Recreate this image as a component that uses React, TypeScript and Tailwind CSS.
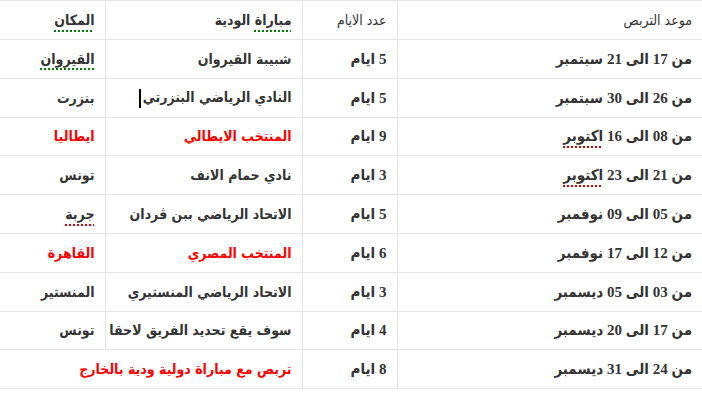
const rows = [
  { date: "من 17 الى 21 سبتمبر", days: "5 ايام", match: "شبيبة القيروان", place: "القيروان", red: false, placeMark: "green" },
  { date: "من 26 الى 30 سبتمبر", days: "5 ايام", match: "النادي الرياضي البنزرتي", place: "بنزرت", red: false, caret: true },
  { date: "من 08 الى 16 اكتوبر", days: "9 ايام", match: "المنتخب الايطالي", place: "ايطاليا", red: true, dateMark: true },
  { date: "من 21 الى 23 اكتوبر", days: "3 ايام", match: "نادي حمام الانف", place: "تونس", red: false, dateMark: true },
  { date: "من 05 الى 09 نوفمبر", days: "5 ايام", match: "الاتحاد الرياضي ببن ڤردان", place: "جربة", red: false, placeMark: "red" },
  { date: "من 12 الى 17 نوفمبر", days: "6 ايام", match: "المنتخب المصري", place: "القاهرة", red: true },
  { date: "من 03 الى 05 ديسمبر", days: "3 ايام", match: "الاتحاد الرياضي المنستيري", place: "المنستير", red: false },
  { date: "من 17 الى 20 ديسمبر", days: "4 ايام", match: "سوف يقع تحديد الفريق لاحقا", place: "تونس", red: false },
];

const serif = "font-['Liberation_Serif','DejaVu_Sans_Condensed','DejaVu_Sans',serif] text-[15px]";
const sans = "font-['DejaVu_Sans_Condensed','DejaVu_Sans',sans-serif] text-[14px]";
const cell = "border border-[#e6e6e6] px-[10px] text-right align-middle whitespace-nowrap overflow-hidden leading-[20px]";
const greenMark = "underline decoration-dotted decoration-[#008000] decoration-2 underline-offset-[5px]";
const redMark = "underline decoration-dotted decoration-[#e00000] decoration-2 underline-offset-[5px]";

function DateText({ text, mark }: { text: string; mark?: boolean }) {
  if (!mark) return <>{text}</>;
  const parts = text.split(" ");
  const last = parts.pop();
  return (
    <>
      {parts.join(" ")} <span className={redMark}>{last}</span>
    </>
  );
}

export default function App() {
  return (
    <div className="w-[702px] h-[395px] bg-white overflow-hidden" dir="rtl">
      <table className="w-[702px] border-collapse border-t border-[#e6e6e6] table-fixed text-[#333]">
        <colgroup>
          <col className="w-[305px]" />
          <col className="w-[95px]" />
          <col className="w-[197px]" />
          <col className="w-[105px]" />
        </colgroup>
        <thead>
          <tr className="h-[39px]">
            <th className={`${cell} ${sans} font-normal border-r-0`}>موعد التربص</th>
            <th className={`${cell} ${sans} font-normal`}>عدد الايام</th>
            <th className={`${cell} ${sans} font-bold`}>
              <span className={greenMark}>مباراة</span> الودية
            </th>
            <th className={`${cell} ${sans} font-bold border-l-0`}>
              <span className={greenMark}>المكان</span>
            </th>
          </tr>
        </thead>
        <tbody className="font-bold">
          {rows.map((r) => (
            <tr key={r.date} className="h-[38.8px]">
              <td className={`${cell} ${serif} border-r-0`}>
                <DateText text={r.date} mark={r.dateMark} />
              </td>
              <td className={`${cell} ${serif}`}>{r.days}</td>
              <td className={`${cell} ${sans} ${r.red ? "text-[#ff0000]" : ""}`}>
                {r.match}
                {r.caret && <span className="inline-block w-[2px] h-[19px] bg-black align-middle mr-[2px]" />}
              </td>
              <td className={`${cell} ${sans} border-l-0 ${r.red ? "text-[#ff0000]" : ""}`}>
                {r.placeMark === "green" ? (
                  <span className={greenMark}>{r.place}</span>
                ) : r.placeMark === "red" ? (
                  <span className={redMark}>{r.place}</span>
                ) : (
                  r.place
                )}
              </td>
            </tr>
          ))}
          <tr className="h-[38.8px]">
            <td className={`${cell} ${serif} border-r-0`}>من 24 الى 31 ديسمبر</td>
            <td className={`${cell} ${serif}`}>8 ايام</td>
            <td colSpan={2} className={`${cell} ${sans} border-l-0 text-[#ff0000]`}>
              تربص مع مباراة دولية ودية بالخارج
            </td>
          </tr>
        </tbody>
      </table>
    </div>
  );
}
